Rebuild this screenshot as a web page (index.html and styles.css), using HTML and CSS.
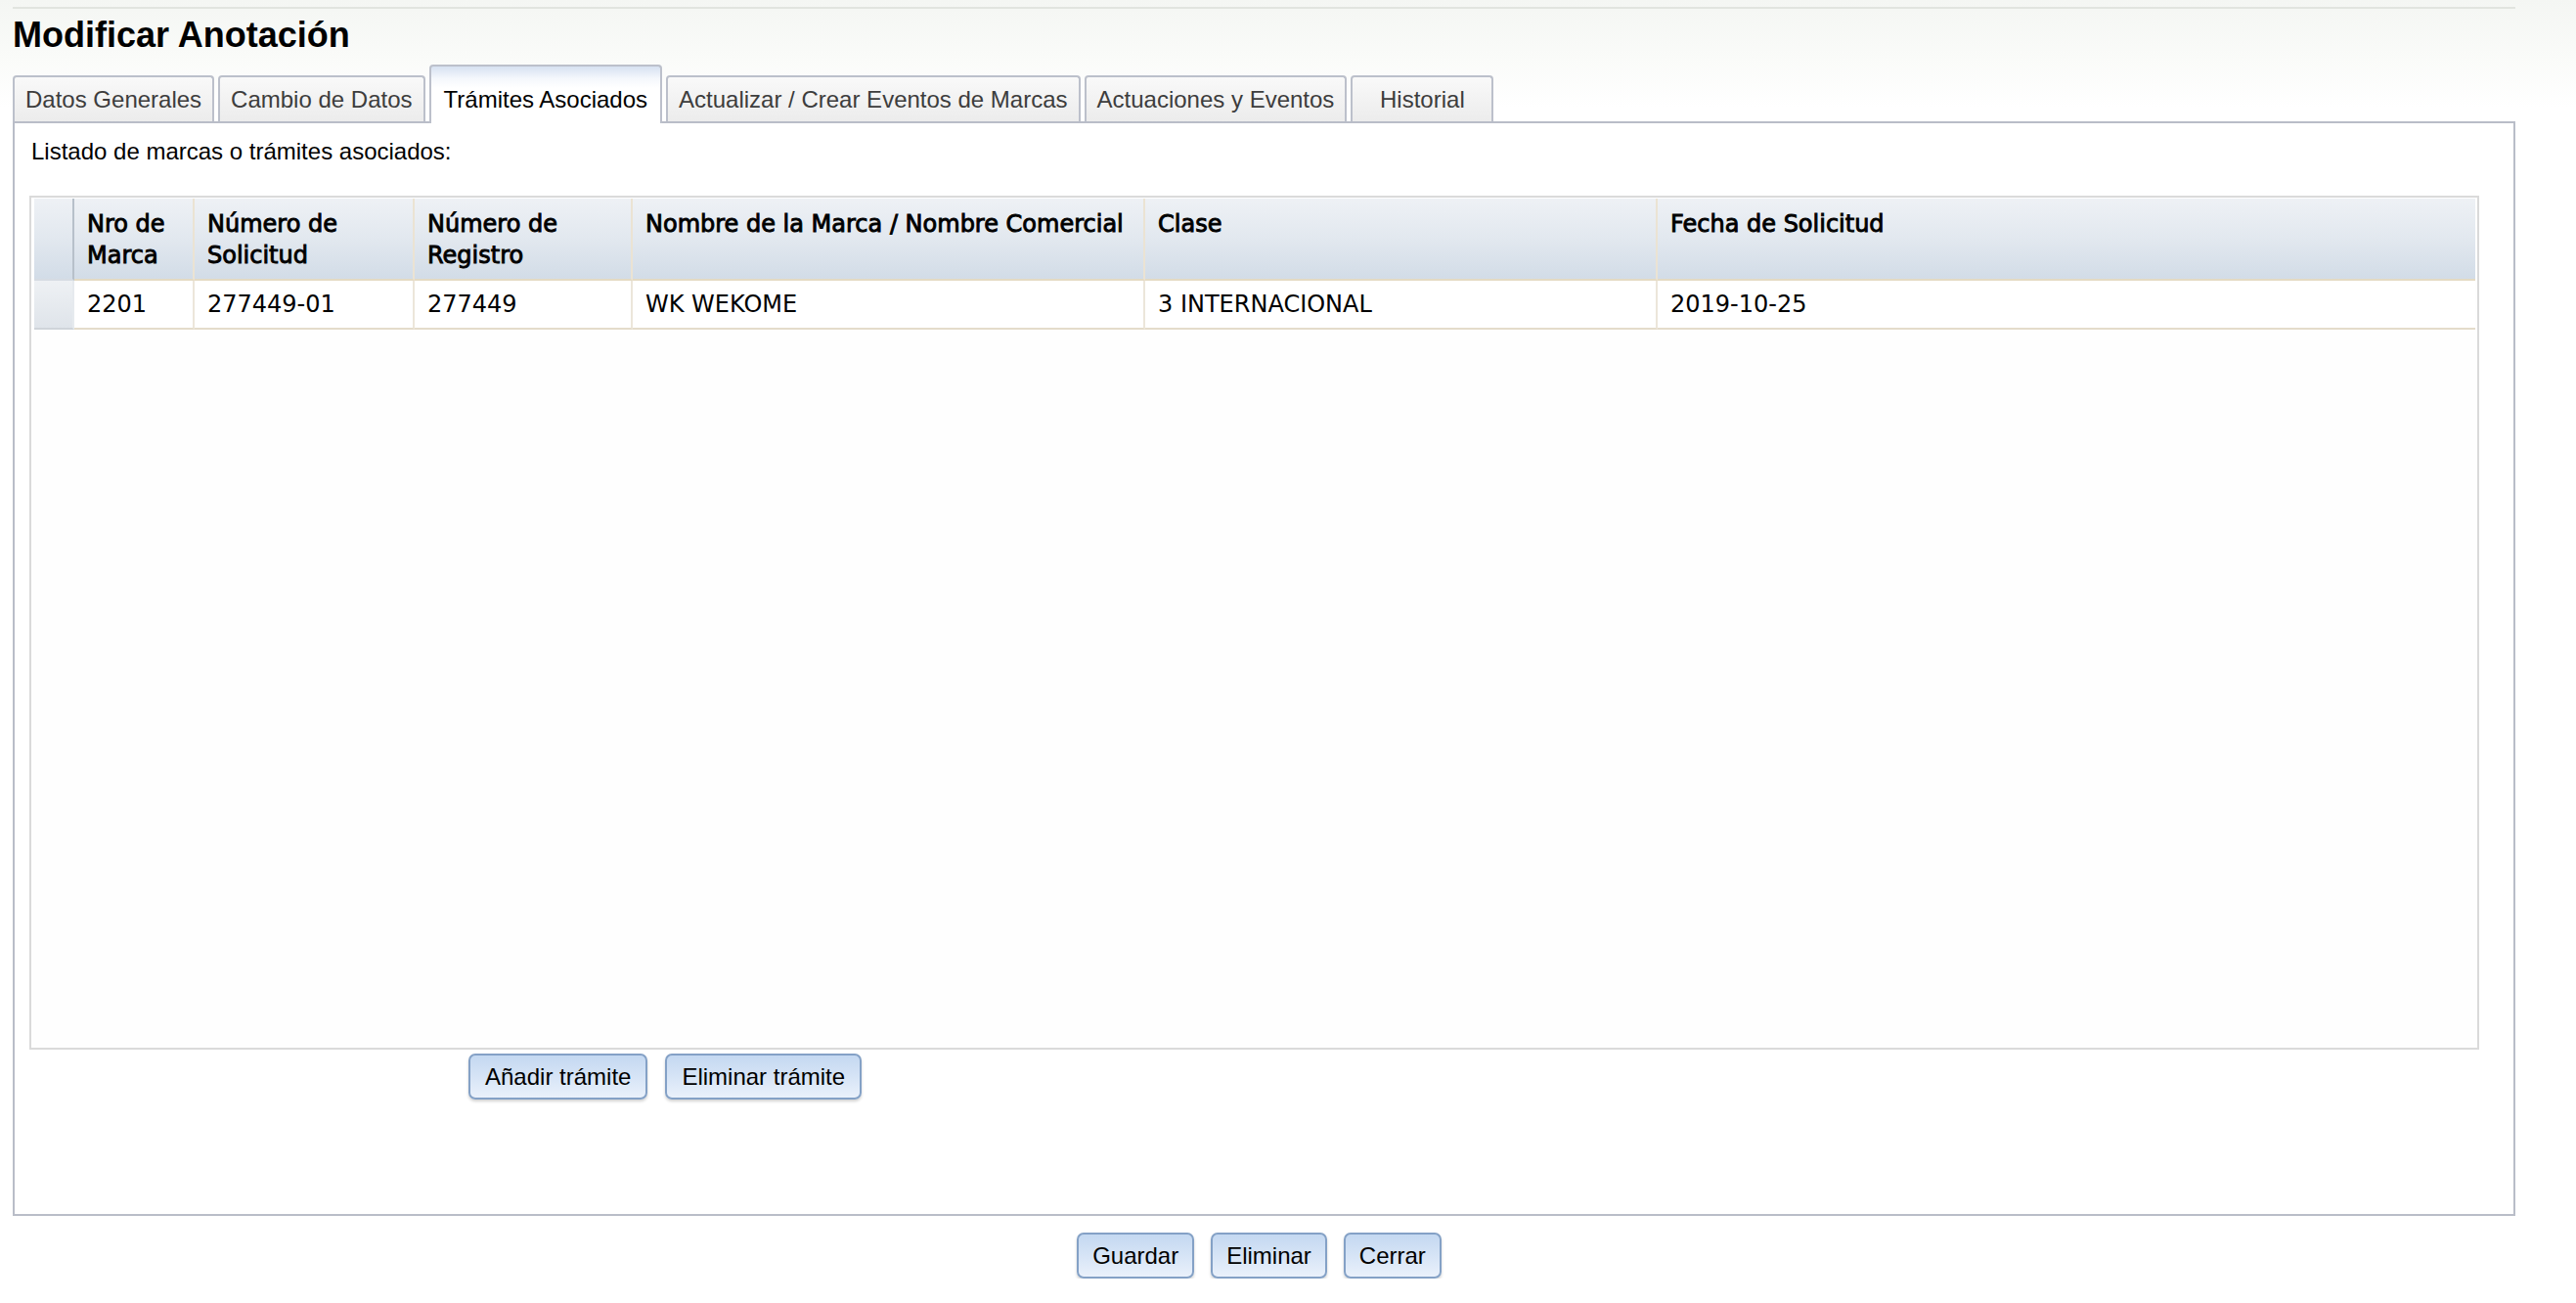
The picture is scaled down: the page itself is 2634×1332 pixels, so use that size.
FILE: index.html
```html
<!DOCTYPE html>
<html lang="es">
<head>
<meta charset="utf-8">
<title>Modificar Anotación</title>
<link rel="stylesheet" href="styles.css">
</head>
<body>
<div class="topline"></div>
<h1 class="title">Modificar Anotación</h1>
<div class="tabs">
  <div class="tab">Datos Generales</div>
  <div class="tab">Cambio de Datos</div>
  <div class="tab active">Trámites Asociados</div>
  <div class="tab">Actualizar / Crear Eventos de Marcas</div>
  <div class="tab">Actuaciones y Eventos</div>
  <div class="tab tab-min">Historial</div>
</div>
<div class="panel">
  <p class="caption">Listado de marcas o trámites asociados:</p>
  <div class="grid">
    <table class="grid-table">
      <colgroup>
        <col class="c-rn"><col class="c-1"><col class="c-2"><col class="c-3"><col class="c-4"><col class="c-5"><col>
      </colgroup>
      <thead>
        <tr>
          <th class="rn"></th>
          <th>Nro de Marca</th>
          <th>Número de Solicitud</th>
          <th>Número de Registro</th>
          <th>Nombre de la Marca / Nombre Comercial</th>
          <th>Clase</th>
          <th class="last">Fecha de Solicitud</th>
        </tr>
      </thead>
      <tbody>
        <tr>
          <td class="rn"></td>
          <td>2201</td>
          <td>277449-01</td>
          <td>277449</td>
          <td>WK WEKOME</td>
          <td>3 INTERNACIONAL</td>
          <td class="last">2019-10-25</td>
        </tr>
      </tbody>
    </table>
  </div>
  <div class="grid-actions">
    <button class="btn btn-wide">Añadir trámite</button>
    <button class="btn btn-wide">Eliminar trámite</button>
  </div>
</div>
<div class="actions">
  <button class="btn">Guardar</button>
  <button class="btn">Eliminar</button>
  <button class="btn">Cerrar</button>
</div>
</body>
</html>
```
FILE: styles.css
```css
html, body {
  margin: 0;
  padding: 0;
}
body {
  background: #ffffff linear-gradient(to bottom, #f4f6f3 0px, #fafbf9 60px, #ffffff 110px) no-repeat;
  font-family: "Liberation Sans", Arial, sans-serif;
  color: #000;
}
.topline {
  margin: 7px 62px 0 13px;
  height: 0;
  border-top: 2px solid #e1e4df;
}
.title {
  margin: 6px 0 0 13px;
  font-size: 36px;
  line-height: 42px;
  font-weight: bold;
  color: #000;
}
.tabs {
  display: flex;
  align-items: flex-end;
  gap: 4px;
  margin: 9px 0 0 13px;
}
.tab {
  box-sizing: border-box;
  padding: 0 11px;
  border: 2px solid #bcc0cb;
  border-bottom: none;
  border-radius: 4px 4px 0 0;
  background: linear-gradient(to bottom, #f9f9f9, #ececec);
  font-size: 24px;
  line-height: 45px;
  color: #3d3d3d;
  white-space: nowrap;
  text-align: center;
}
.tab-min {
  min-width: 146px;
}
.tab.active {
  position: relative;
  z-index: 1;
  padding: 11px 13px 2px 13px;
  margin-bottom: -2px;
  background: linear-gradient(to bottom, #d6e1f1 0px, #f4f7fc 12px, #ffffff 22px);
  color: #000;
}
.panel {
  box-sizing: border-box;
  height: 1119px;
  margin: 0 62px 0 13px;
  padding: 15px 35px 0 15px;
  border: 2px solid #b9bdc8;
  background: #fff;
}
.caption {
  margin: 0 0 31px 0;
  padding-left: 2px;
  font-size: 24px;
  line-height: 28px;
}
.grid {
  box-sizing: border-box;
  height: 873px;
  padding: 1px 2px 1px 3px;
  border: 2px solid #dadada;
  background: #fefefe;
}
.grid-table {
  width: 100%;
  table-layout: fixed;
  border-collapse: separate;
  border-spacing: 0;
  font-family: "DejaVu Sans", Verdana, sans-serif;
  font-size: 24px;
  color: #000;
}
.c-rn { width: 41px; }
.c-1 { width: 123px; }
.c-2 { width: 225px; }
.c-3 { width: 223px; }
.c-4 { width: 524px; }
.c-5 { width: 524px; }
.grid-table th {
  box-sizing: border-box;
  height: 82px;
  padding: 10px 12px 8px 13px;
  vertical-align: top;
  text-align: left;
  font-weight: normal;
  line-height: 32px;
  -webkit-text-stroke: 0.9px #000;
  background: linear-gradient(to bottom, #eef1f5 0%, #e2e8ef 50%, #d2dce7 100%);
  border-right: 2px solid #ebe3d3;
  border-bottom: 2px solid #e4dac4;
}
.grid-table th.rn {
  padding: 0;
  border-right: 2px solid #b7c0ca;
  border-bottom: 2px solid #d6dce3;
}
.grid-table th.last,
.grid-table td.last {
  border-right: none;
}
.grid-table td {
  padding: 0 12px 0 13px;
  line-height: 48px;
  height: 48px;
  white-space: nowrap;
  background: #fff;
  border-right: 2px solid #ece6da;
  border-bottom: 2px solid #e4dccb;
}
.grid-table td.rn {
  padding: 0;
  background: linear-gradient(to bottom, #eef1f4, #dfe4ea);
  border-right: 2px solid #e6eaee;
  border-bottom: 2px solid #cfd4da;
}
.grid-actions {
  display: flex;
  gap: 18px;
  margin-top: 4px;
  padding-left: 449px;
}
.btn {
  box-sizing: border-box;
  height: 47px;
  padding: 0 14px;
  border: 2px solid #84a1c6;
  border-radius: 7px;
  background: linear-gradient(to bottom, #c4d8f1 0%, #d6e4f6 50%, #eaf1fb 100%);
  box-shadow: 0 2px 3px rgba(0, 0, 0, 0.18);
  font-family: "Liberation Sans", Arial, sans-serif;
  font-size: 24px;
  color: #000;
  cursor: pointer;
}
.btn-wide {
  padding: 0 15px;
}
.actions {
  display: flex;
  justify-content: center;
  gap: 17px;
  margin: 17px 62px 0 13px;
  padding-right: 10px;
}
```
